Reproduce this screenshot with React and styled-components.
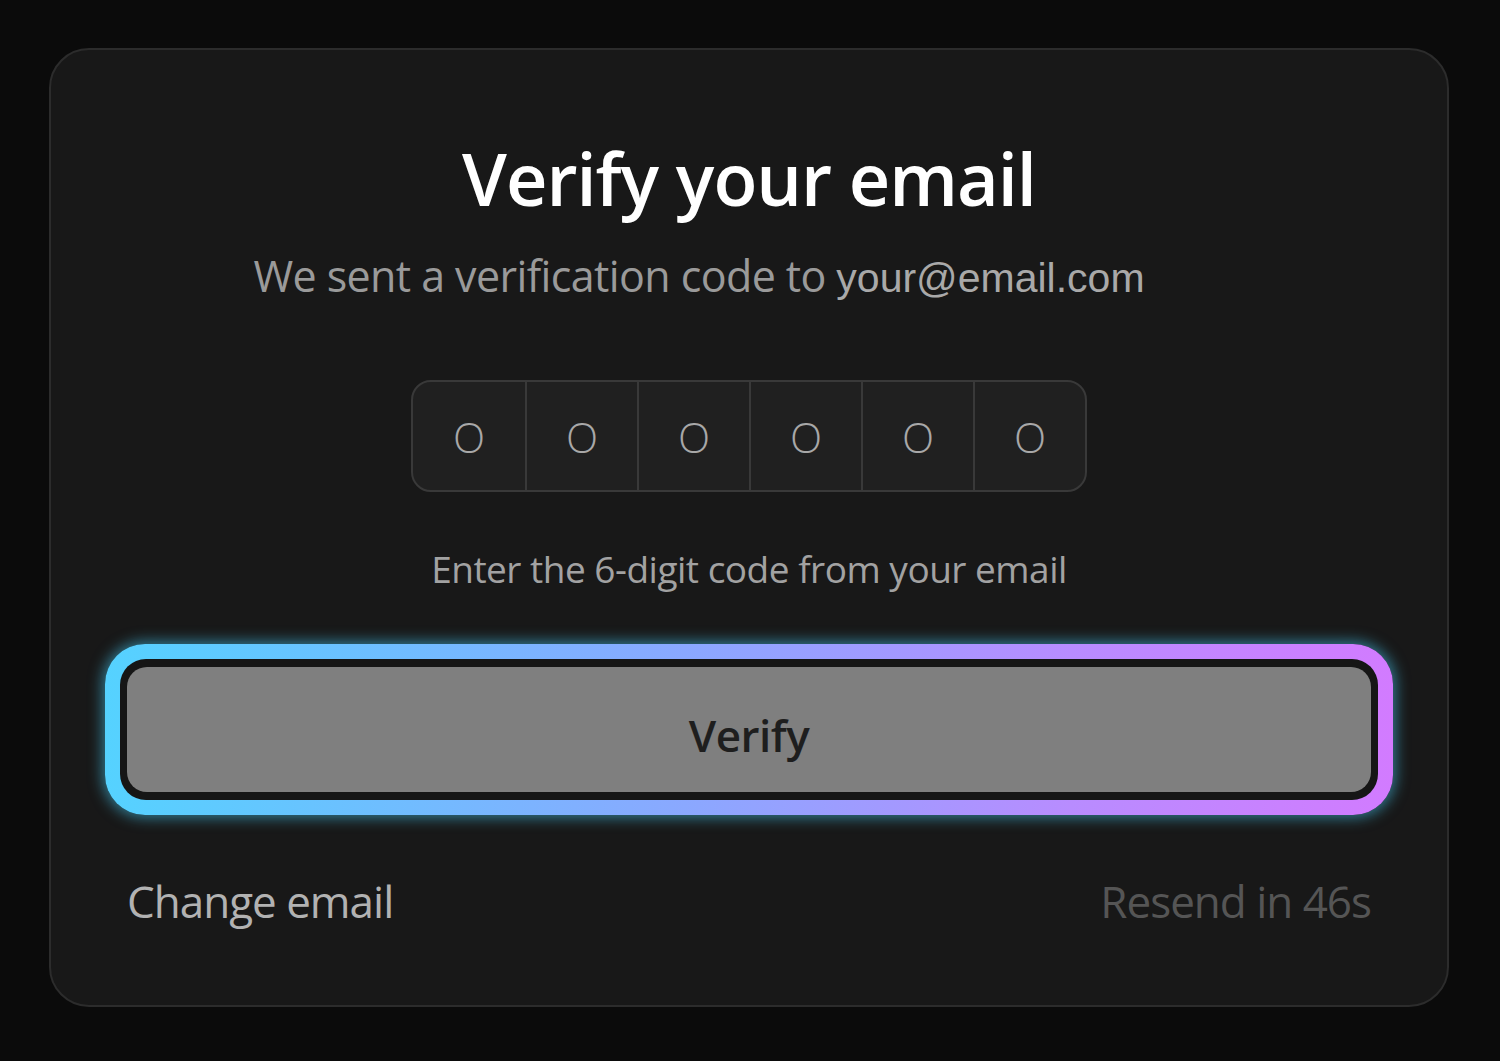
import React from 'react';
import styled, { createGlobalStyle } from 'styled-components';

const GlobalStyle = createGlobalStyle`
  html, body {
    margin: 0;
    padding: 0;
    background: #0b0b0b;
  }

  * {
    box-sizing: border-box;
  }
`;

const Page = styled.div`
  min-height: 1061px;
  padding: 48px 51px 54px 49px;
  font-family: 'Open Sans', 'Noto Sans', sans-serif;
`;

const Card = styled.div`
  height: 959px;
  background: #181818;
  border: 2px solid #2c2c2c;
  border-radius: 40px;
  padding: 88px 54px 0 54px;
  display: flex;
  flex-direction: column;
  align-items: center;
`;

const Title = styled.h1`
  margin: 0;
  font-size: 72px;
  line-height: 80px;
  font-weight: 600;
  color: #ffffff;
  letter-spacing: -1px;
`;

const Subtitle = styled.p`
  margin: 28px 0 0;
  font-size: 43px;
  line-height: 60px;
  color: #9a9a9a;
  letter-spacing: -0.6px;
  padding-right: 100px;
`;

const Email = styled.span`
  color: #a9a9a9;
  font-family: 'Liberation Sans', Arial, sans-serif;
  letter-spacing: 0;
  font-size: 41px;
`;

const CodeRow = styled.div`
  margin-top: 72px;
  display: grid;
  grid-template-columns: repeat(6, 112px);
  height: 112px;
  border: 2px solid #393939;
  border-radius: 20px;
  overflow: hidden;
  background: #202020;
`;

const CodeCell = styled.div`
  display: flex;
  align-items: center;
  justify-content: center;
  border-left: ${({ first }) => (first ? 'none' : '2px solid #393939')};
  font-size: 42px;
  font-weight: 300;
  color: #a8a8a8;
`;

const Hint = styled.p`
  margin: 52px 0 0;
  font-size: 37px;
  line-height: 50px;
  color: #a2a2a2;
  letter-spacing: -0.5px;
`;

const GlowRing = styled.div`
  margin-top: 50px;
  width: 100%;
  padding: 15px;
  border-radius: 40px;
  background: linear-gradient(90deg, #55d2ff 0%, #8aa8ff 45%, #b88cff 75%, #d27bff 100%);
  box-shadow: 0 0 14px 3px rgba(70, 200, 240, 0.55);
`;

const ButtonWell = styled.div`
  padding: 8px 7px;
  background: #161616;
  border-radius: 26px;
`;

const VerifyButton = styled.button`
  display: block;
  width: 100%;
  height: 125px;
  padding: 10px 0 0;
  border: none;
  border-radius: 20px;
  background: #7f7f7f;
  color: #1e1e1e;
  font-family: inherit;
  font-size: 44px;
  font-weight: 600;
  letter-spacing: -0.5px;
  cursor: pointer;
`;

const Footer = styled.div`
  margin-top: 56px;
  width: 100%;
  padding: 0 22px;
  display: flex;
  justify-content: space-between;
  align-items: center;
  font-size: 44px;
  line-height: 60px;
  letter-spacing: -1px;
`;

const FooterLink = styled.span`
  color: ${({ muted }) => (muted ? '#555555' : '#b2b2b2')};
  cursor: pointer;
`;

export default function App() {
  const digits = ['O', 'O', 'O', 'O', 'O', 'O'];

  return (
    <>
      <GlobalStyle />
      <Page>
        <Card>
          <Title>Verify your email</Title>
          <Subtitle>
            We sent a verification code to <Email>your@email.com</Email>
          </Subtitle>
          <CodeRow>
            {digits.map((d, i) => (
              <CodeCell key={i} first={i === 0}>
                {d}
              </CodeCell>
            ))}
          </CodeRow>
          <Hint>Enter the 6-digit code from your email</Hint>
          <GlowRing>
            <ButtonWell>
              <VerifyButton>Verify</VerifyButton>
            </ButtonWell>
          </GlowRing>
          <Footer>
            <FooterLink>Change email</FooterLink>
            <FooterLink muted>Resend in 46s</FooterLink>
          </Footer>
        </Card>
      </Page>
    </>
  );
}
